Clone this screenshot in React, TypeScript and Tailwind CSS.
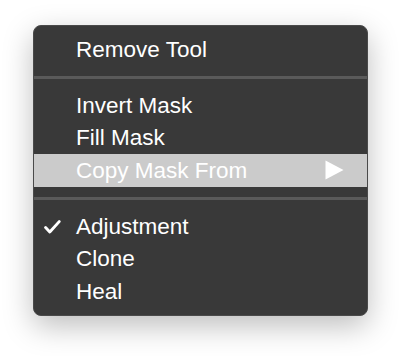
import React from 'react'

type Item = { label: string; checked?: boolean; active?: boolean; submenu?: boolean }

const GROUPS: Item[][] = [
  [{ label: 'Remove Tool' }],
  [{ label: 'Invert Mask' }, { label: 'Fill Mask' }, { label: 'Copy Mask From', active: true, submenu: true }],
  [{ label: 'Adjustment', checked: true }, { label: 'Clone' }, { label: 'Heal' }],
]

function Check() {
  return (
    <svg width="17" height="14" viewBox="0 0 17 14" className="absolute left-[10px] top-[10px]">
      <path d="M1.6 7.6 L5.8 12 L15.2 1.6" fill="none" stroke="#fff" strokeWidth="2.9" strokeLinecap="round" strokeLinejoin="round" />
    </svg>
  )
}

function Row({ item }: { item: Item }) {
  return (
    <div className={`relative flex h-[32.5px] items-center pl-[42px] pr-[23px] ${item.active ? 'bg-[#cbcbcb]' : ''}`}>
      {item.checked && <Check />}
      <span className="flex-1 pt-[1px] text-[22.5px] leading-none text-white">{item.label}</span>
      {item.submenu && (
        <svg width="19" height="20" viewBox="0 0 19 20">
          <path d="M0.5 0.5 L18.5 10 L0.5 19.5 Z" fill="#fff" />
        </svg>
      )}
    </div>
  )
}

export default function App() {
  return (
    <div className="h-[356px] w-[402px] bg-white pl-[33px] pt-[25px]" style={{ fontFamily: '"Liberation Sans", Arial, sans-serif' }}>
      <div className="w-[335px] overflow-hidden rounded-[8px] border border-[#4a4a4a] bg-[#393939] py-[7px] shadow-[0_10px_30px_rgba(0,0,0,0.26)]">
        {GROUPS.map((g, i) => (
          <div key={i}>
            {i > 0 && (
              <div className="py-[10px]">
                <div className="h-[3.5px] bg-[#5a5a5a]" />
              </div>
            )}
            {g.map((it) => <Row key={it.label} item={it} />)}
          </div>
        ))}
      </div>
    </div>
  )
}
